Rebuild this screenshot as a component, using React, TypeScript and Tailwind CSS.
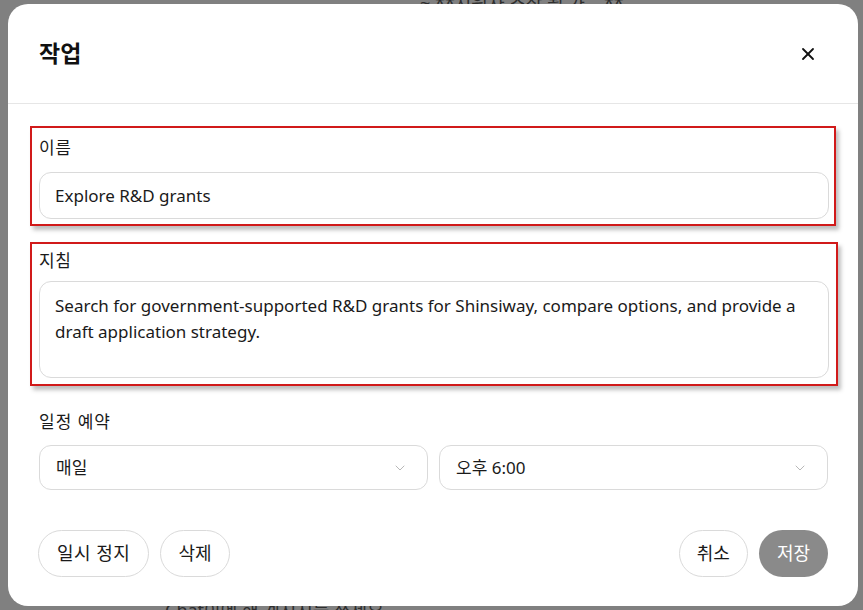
import React from 'react';
import { X, ChevronDown } from 'lucide-react';

const font = { fontFamily: '"Noto Sans", "Noto Sans CJK KR", sans-serif' };

const Select: React.FC<{ value: string }> = ({ value }) => (
  <div className="flex-1 h-[45px] rounded-[12px] border border-[#dadada] flex items-center justify-between pl-4 pr-[19px]">
    <span className="text-[17px] text-[#1a1a1a]">{value}</span>
    <ChevronDown className="w-[16px] h-[16px] text-[#b8b8b8]" strokeWidth={1.5} />
  </div>
);

const Annotated: React.FC<{ children: React.ReactNode; className?: string }> = ({ children, className }) => (
  <div className={`border-2 border-[#d11a1a] shadow-[3px_4px_4px_rgba(0,0,0,0.25)] ${className ?? ''}`}>{children}</div>
);

export default function App() {
  return (
    <div className="relative w-[863px] h-[610px] overflow-hidden bg-[#808080]" style={font}>
      {/* page content dimmed behind the dialog */}
      <div className="absolute left-[420px] -top-[10px] text-[18px] text-[#2e2e2e] whitespace-nowrap">~ **지원자 조작 될 가 ...**</div>
      <div className="absolute left-[165px] top-[597px] text-[18px] text-[#2e2e2e] whitespace-nowrap">Chat이에 해 계시지를 쓰세요</div>

      <div className="relative ml-[8px] mt-[4px] w-[850px] h-[602px] bg-white rounded-[20px] flex flex-col">
        <div className="h-[100px] border-b border-[#e6e6e6] flex items-center justify-between pl-[31px] pr-[40px]">
          <h2 className="text-[23px] font-bold text-[#111]">작업</h2>
          <X className="w-[20px] h-[20px] text-[#111]" strokeWidth={2.2} />
        </div>

        <div className="flex flex-col px-[22px] pt-[22px]">
          <Annotated className="w-[806px] h-[100px] pl-[7px] pr-[5px] pt-[8px]">
            <div className="text-[17px] tracking-[0.5px] text-[#1a1a1a] leading-[24px]">이름</div>
            <div className="mt-[12px] h-[47px] rounded-[12px] border border-[#dadada] flex items-center px-[15px] text-[17px] text-[#1a1a1a]">
              Explore R&amp;D grants
            </div>
          </Annotated>

          <Annotated className="mt-[16px] w-[808px] h-[144px] pl-[7px] pr-[7px] pt-[4px]">
            <div className="text-[17px] tracking-[0.5px] text-[#1a1a1a] leading-[26px]">지침</div>
            <div className="mt-[7px] h-[97px] rounded-[12px] border border-[#dadada] px-[15px] pt-[11px] text-[17px] leading-[26px] text-[#1a1a1a]">
              Search for government-supported R&amp;D grants for Shinsiway, compare options, and provide a draft application strategy.
            </div>
          </Annotated>

          <div className="mt-[24px] pl-[9px] pr-[8px]">
            <div className="text-[17px] tracking-[1px] text-[#1a1a1a] leading-[24px]">일정 예약</div>
            <div className="mt-[11px] flex gap-[11px]">
              <Select value="매일" />
              <Select value="오후 6:00" />
            </div>
          </div>
        </div>

        <div className="mt-[40px] flex items-center justify-between pl-[30px] pr-[30px]">
          <div className="flex gap-[11px]">
            <button className="h-[47px] px-[18px] rounded-full border border-[#dadada] text-[18px] tracking-[0.5px] text-[#1a1a1a]">일시 정지</button>
            <button className="h-[47px] px-[17px] rounded-full border border-[#dadada] text-[18px] text-[#1a1a1a]">삭제</button>
          </div>
          <div className="flex gap-[11px]">
            <button className="h-[47px] px-[17px] rounded-full border border-[#dadada] text-[18px] text-[#1a1a1a]">취소</button>
            <button className="h-[47px] px-[18px] rounded-full bg-[#8a8a8a] text-[18px] text-white">저장</button>
          </div>
        </div>
      </div>
    </div>
  );
}
